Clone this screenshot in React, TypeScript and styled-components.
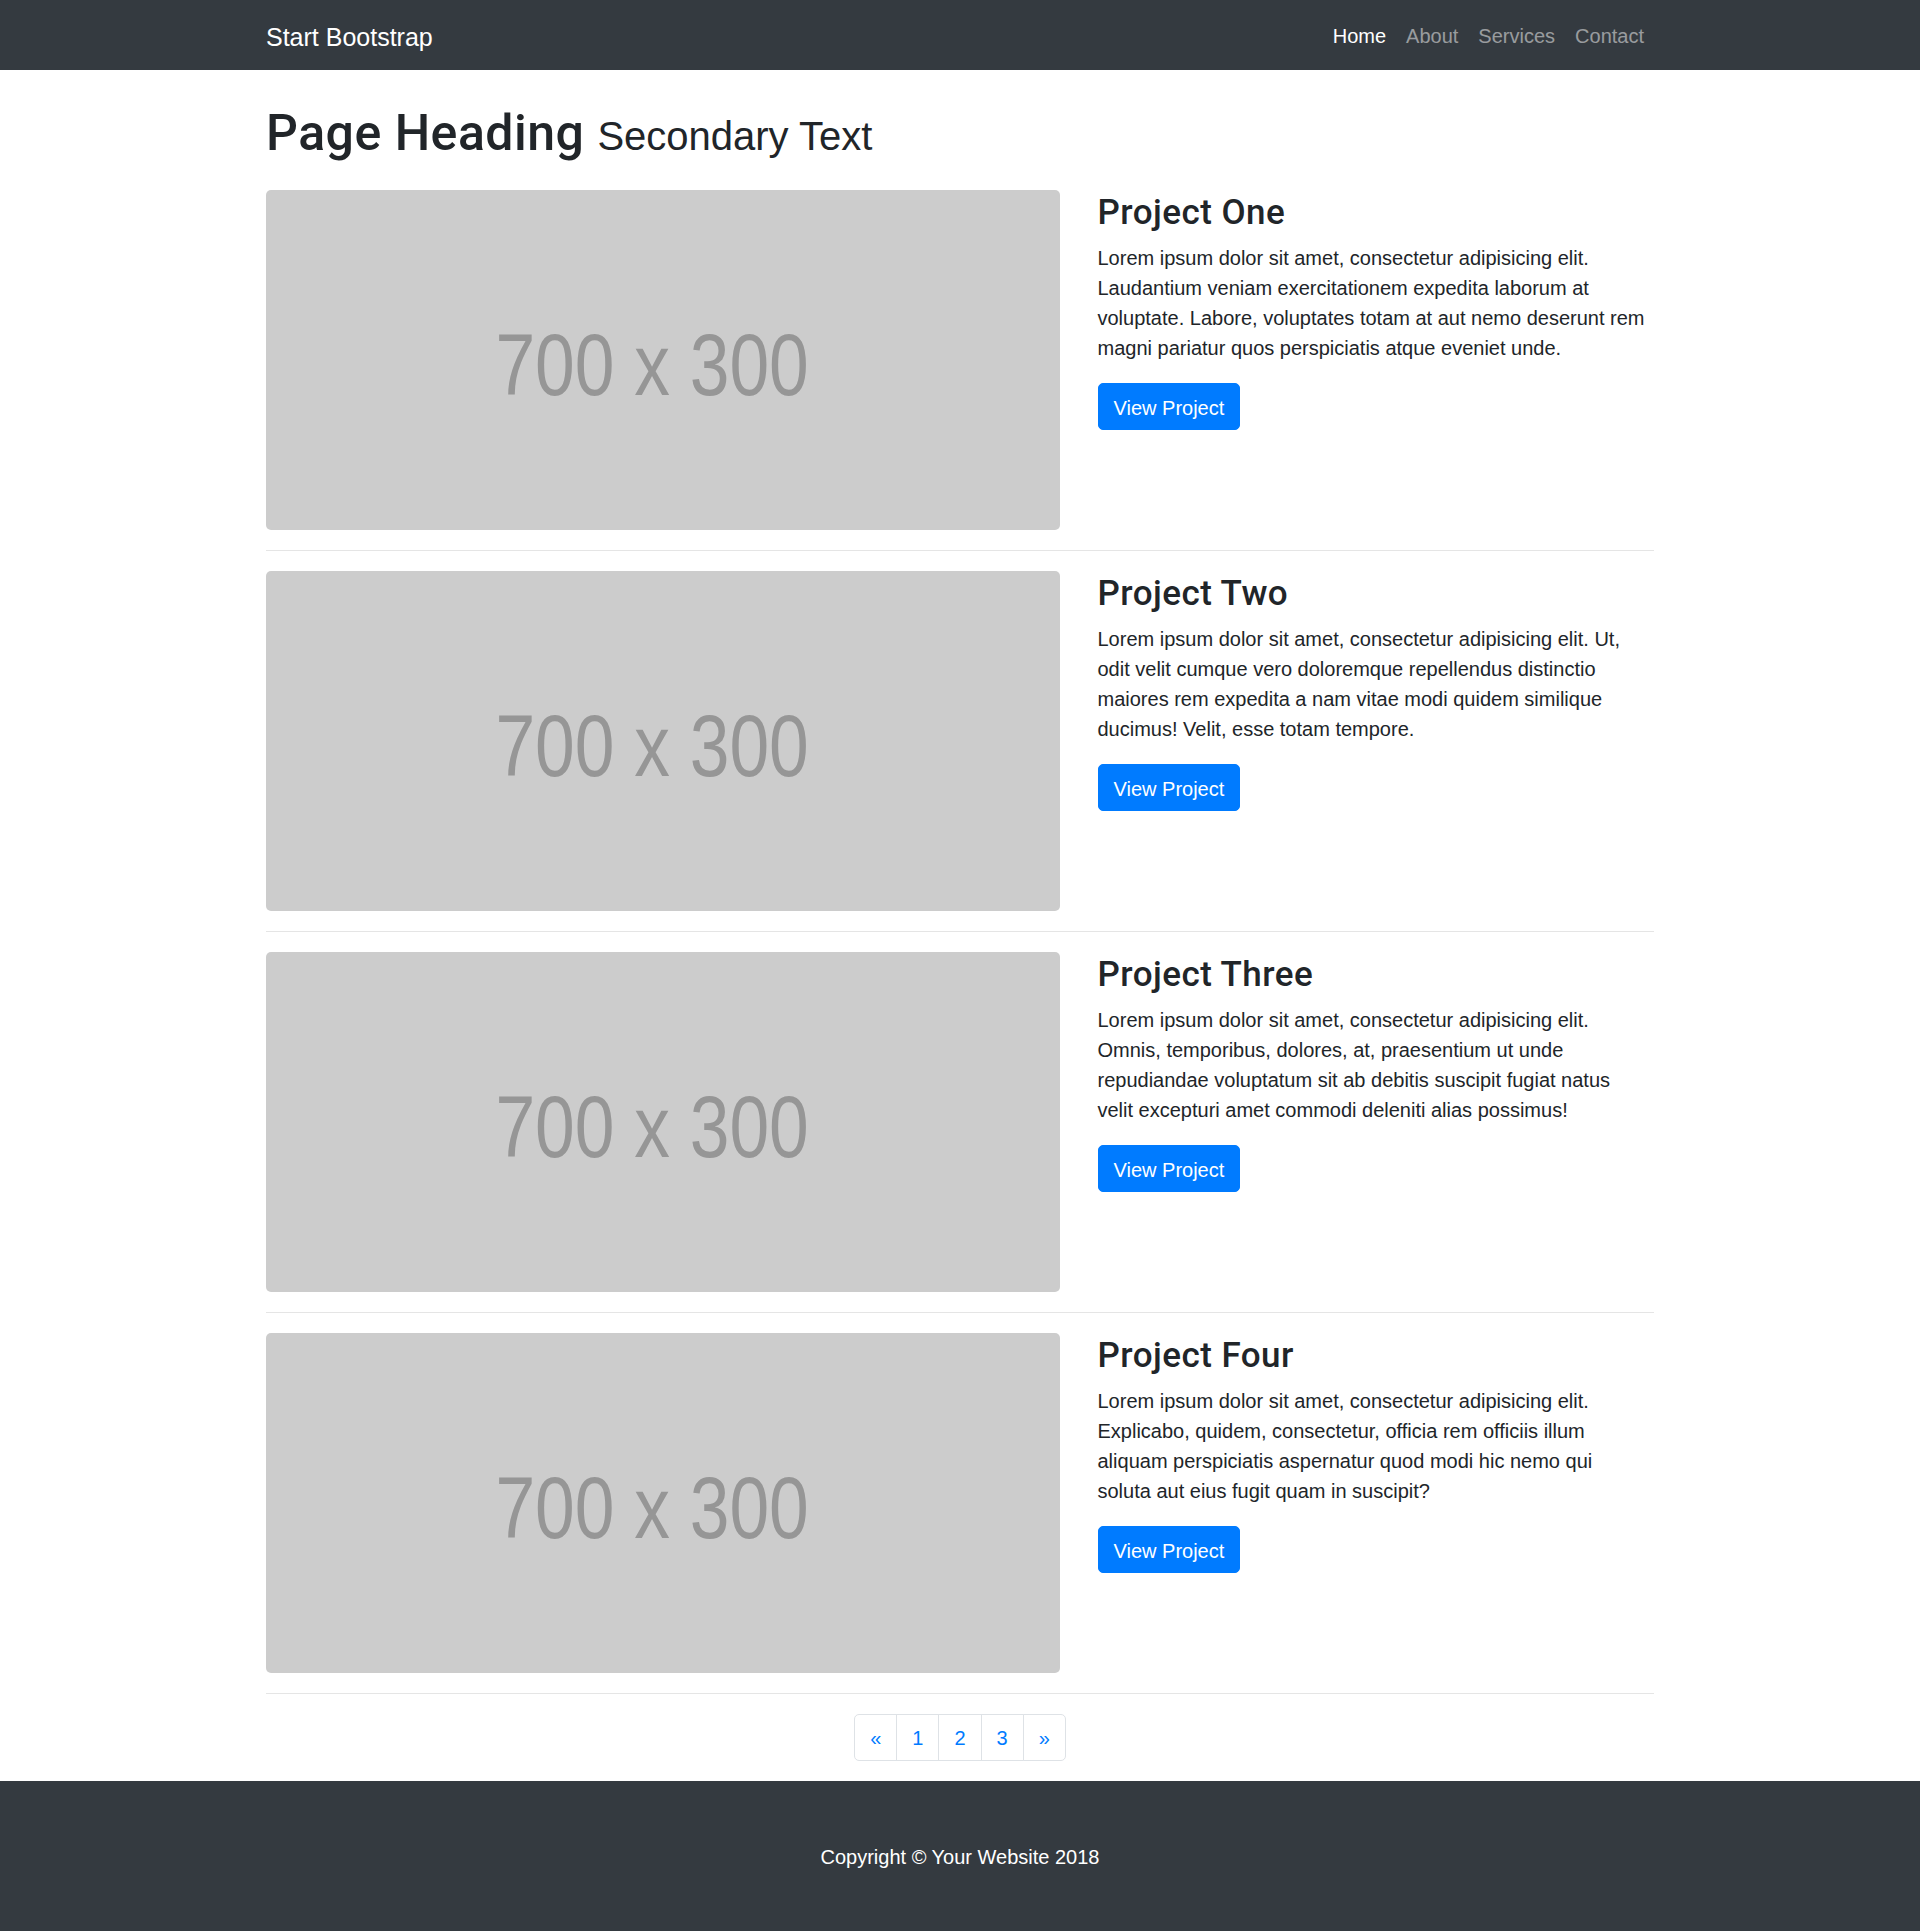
import { FC } from 'react'
import styled, { createGlobalStyle } from 'styled-components'

const GlobalStyle = createGlobalStyle`
  html, body {
    margin: 0;
    padding: 0;
  }

  body {
    font-family: "Liberation Sans", Arial, sans-serif;
    font-size: 20px;
    line-height: 1.5;
    color: #212529;
    background-color: #fff;
  }

  * {
    box-sizing: border-box;
  }
`

const Navbar = styled.nav`
  height: 70px;
  background-color: #343a40;
`

const NavInner = styled.div`
  display: flex;
  align-items: center;
  justify-content: space-between;
  width: 1388px;
  height: 100%;
  margin: 0 auto;
`

const Brand = styled.a`
  padding-top: 5px;
  font-size: 25px;
  line-height: 1.5;
  color: #fff;
  text-decoration: none;
`

const NavList = styled.ul`
  display: flex;
  margin: 0;
  padding: 0;
  list-style: none;
`

const NavLink = styled.a<{ $active?: boolean }>`
  display: block;
  padding: 11px 10px 9px;
  color: ${(p) => (p.$active ? '#fff' : 'rgba(255, 255, 255, 0.5)')};
  text-decoration: none;
`

const Main = styled.main`
  width: 1388px;
  margin: 0 auto;
`

const PageHeading = styled.h1`
  margin: 30px 0 27px;
  padding-top: 3px;
  font-family: Roboto, "Liberation Sans", Arial, sans-serif;
  font-size: 50px;
  font-weight: 500;
  line-height: 1.2;
  letter-spacing: 0.5px;

  small {
    font-family: "Liberation Sans", Arial, sans-serif;
    font-size: 40px;
    font-weight: 400;
    letter-spacing: 0;
  }
`

const ProjectRow = styled.div`
  display: grid;
  grid-template-columns: 794px 1fr;
  column-gap: 37.5px;
`

const Placeholder = styled.div`
  display: flex;
  align-items: center;
  justify-content: center;
  height: 340px;
  padding: 8px 22px 0 0;
  border-radius: 5px;
  background-color: #ccc;
  color: #969696;
  font-size: 87px;
  line-height: 1;

  span {
    display: inline-block;
    transform: scaleX(0.82);
  }
`

const ProjectInfo = styled.div`
  padding-right: 6px;
`

const ProjectTitle = styled.h3`
  margin: 0 0 8px;
  padding-top: 2px;
  font-family: Roboto, "Liberation Sans", Arial, sans-serif;
  font-size: 35px;
  font-weight: 500;
  line-height: 1.2;
  letter-spacing: 0.45px;
`

const ProjectText = styled.p`
  margin: 0 0 20px;
  padding-top: 1px;
`

const Button = styled.a`
  display: inline-block;
  padding: 8.5px 15px 6.5px;
  border: 1px solid #007bff;
  border-radius: 5px;
  background-color: #007bff;
  color: #fff;
  text-decoration: none;
`

const Divider = styled.hr`
  margin: 20px 0;
  border: 0;
  border-top: 1px solid rgba(0, 0, 0, 0.1);
`

const Pagination = styled.ul`
  display: flex;
  justify-content: center;
  margin: 0 0 20px;
  padding: 0;
  list-style: none;
`

const PageLink = styled.a`
  display: block;
  margin-left: -1px;
  padding: 11px 15px 9px;
  border: 1px solid #dee2e6;
  background-color: #fff;
  color: #007bff;
  line-height: 1.25;
  text-decoration: none;

  li:first-child > & {
    margin-left: 0;
    border-radius: 5px 0 0 5px;
  }

  li:last-child > & {
    border-radius: 0 5px 5px 0;
  }
`

const Footer = styled.footer`
  padding: 61px 0 59px;
  background-color: #343a40;
`

const Copyright = styled.p`
  margin: 0;
  color: #fff;
  text-align: center;
`

const projects = [
  {
    title: 'Project One',
    text: 'Lorem ipsum dolor sit amet, consectetur adipisicing elit. Laudantium veniam exercitationem expedita laborum at voluptate. Labore, voluptates totam at aut nemo deserunt rem magni pariatur quos perspiciatis atque eveniet unde.',
  },
  {
    title: 'Project Two',
    text: 'Lorem ipsum dolor sit amet, consectetur adipisicing elit. Ut, odit velit cumque vero doloremque repellendus distinctio maiores rem expedita a nam vitae modi quidem similique ducimus! Velit, esse totam tempore.',
  },
  {
    title: 'Project Three',
    text: 'Lorem ipsum dolor sit amet, consectetur adipisicing elit. Omnis, temporibus, dolores, at, praesentium ut unde repudiandae voluptatum sit ab debitis suscipit fugiat natus velit excepturi amet commodi deleniti alias possimus!',
  },
  {
    title: 'Project Four',
    text: 'Lorem ipsum dolor sit amet, consectetur adipisicing elit. Explicabo, quidem, consectetur, officia rem officiis illum aliquam perspiciatis aspernatur quod modi hic nemo qui soluta aut eius fugit quam in suscipit?',
  },
]

const pages = ['«', '1', '2', '3', '»']

const App: FC = () => {
  return (
    <>
      <GlobalStyle />
      <Navbar>
        <NavInner>
          <Brand href="#">Start Bootstrap</Brand>
          <NavList>
            <li><NavLink href="#" $active>Home</NavLink></li>
            <li><NavLink href="#">About</NavLink></li>
            <li><NavLink href="#">Services</NavLink></li>
            <li><NavLink href="#">Contact</NavLink></li>
          </NavList>
        </NavInner>
      </Navbar>

      <Main>
        <PageHeading>
          Page Heading <small>Secondary Text</small>
        </PageHeading>

        {projects.map((project) => (
          <div key={project.title}>
            <ProjectRow>
              <Placeholder>
                <span>700 x 300</span>
              </Placeholder>
              <ProjectInfo>
                <ProjectTitle>{project.title}</ProjectTitle>
                <ProjectText>{project.text}</ProjectText>
                <Button href="#">View Project</Button>
              </ProjectInfo>
            </ProjectRow>
            <Divider />
          </div>
        ))}

        <Pagination>
          {pages.map((page) => (
            <li key={page}>
              <PageLink href="#">{page}</PageLink>
            </li>
          ))}
        </Pagination>
      </Main>

      <Footer>
        <Copyright>Copyright © Your Website 2018</Copyright>
      </Footer>
    </>
  )
}

export default App
